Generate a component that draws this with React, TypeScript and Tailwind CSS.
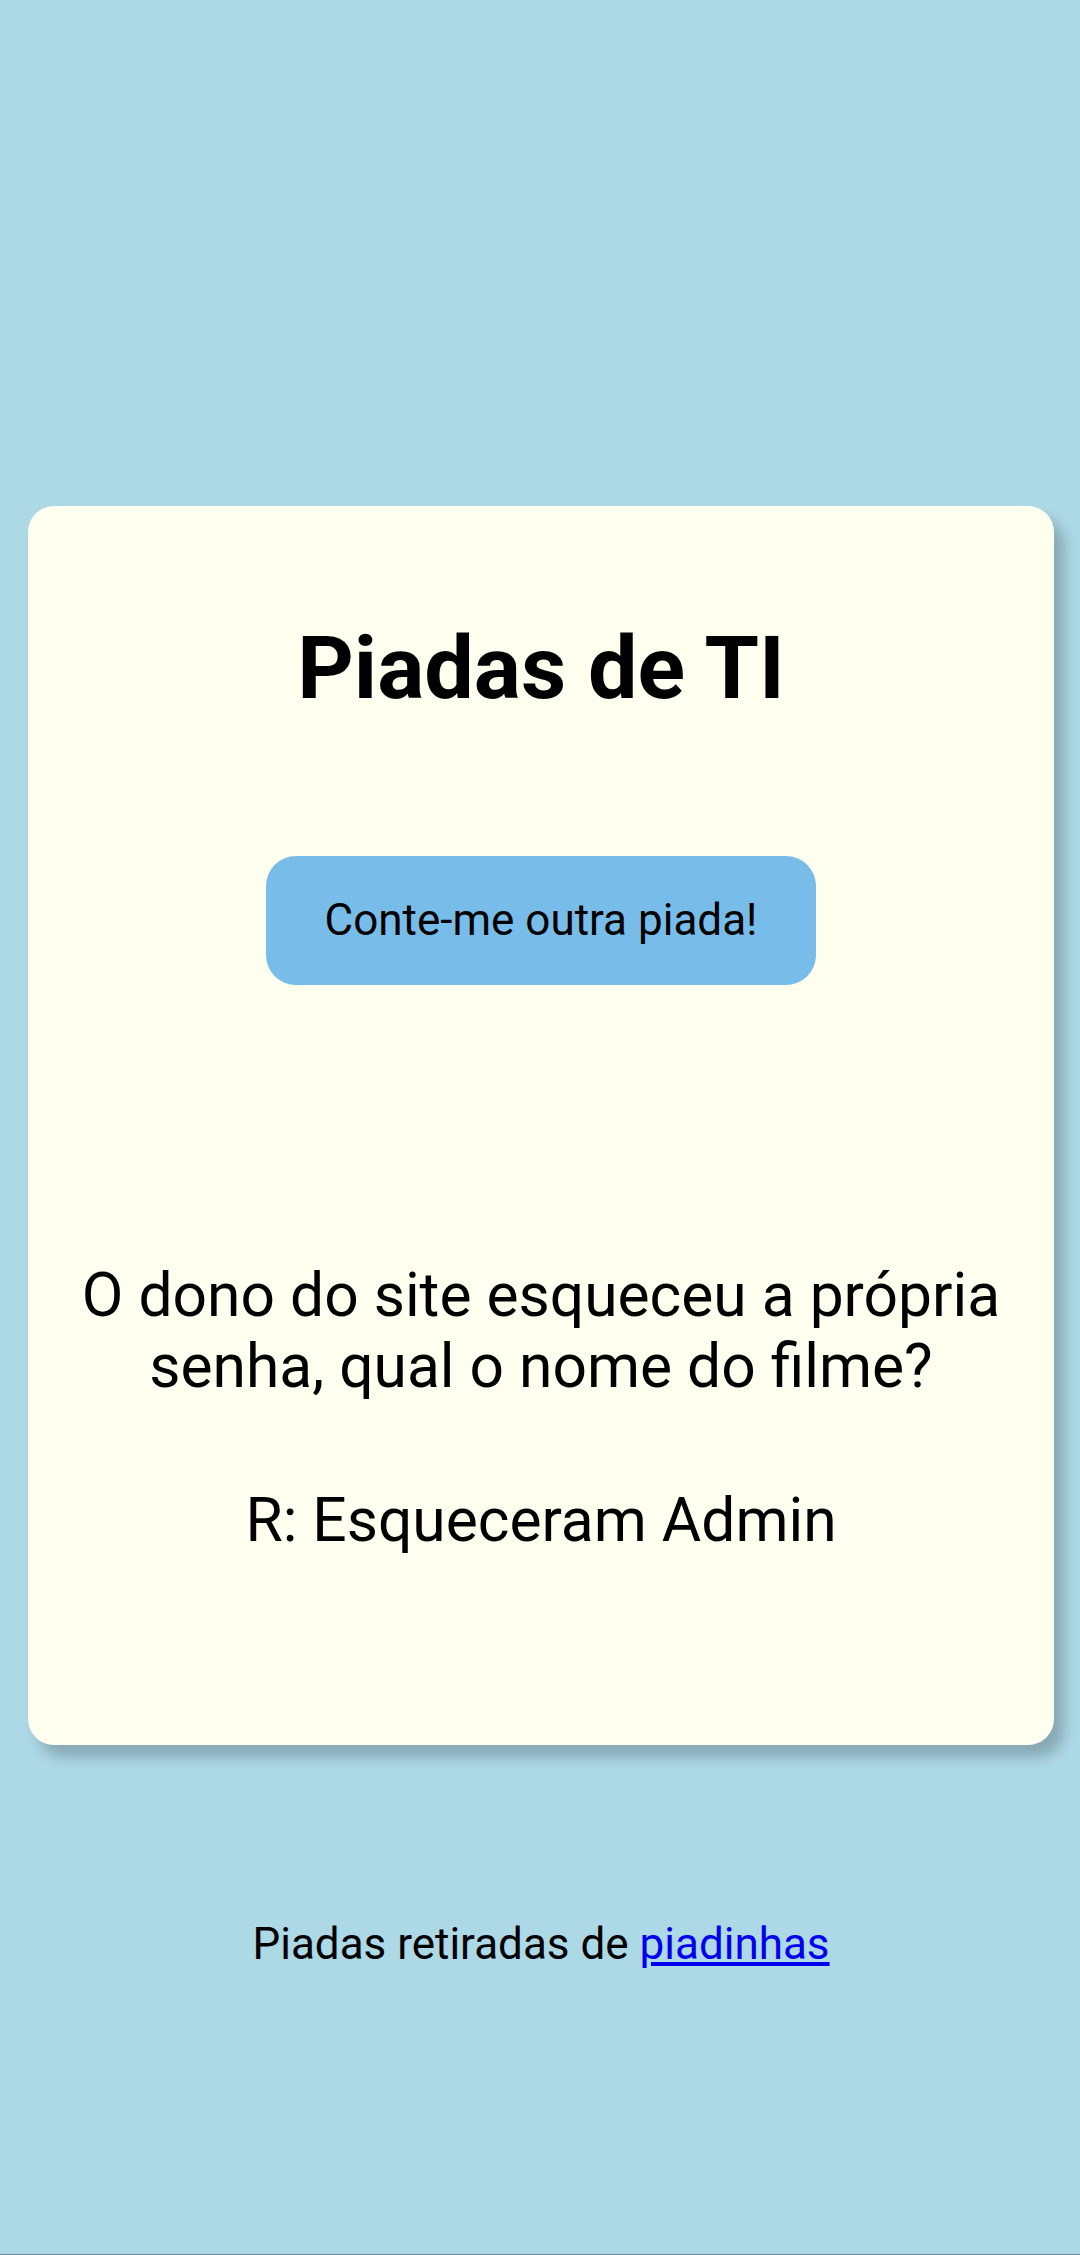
export default function App() {
  return (
    <div
      className="h-[2255px] bg-[#add8e6] border-b border-[#6d8c97] pl-[28px] pr-[26px] pt-[506px] text-black"
      style={{ fontFamily: "Roboto, 'Noto Sans', Arial, sans-serif" }}
    >
      <div className="bg-[#fffff0] rounded-[26px] shadow-[10px_12px_14px_rgba(0,0,0,0.22)] pt-[110px] pb-[188px] flex flex-col items-center text-center">
        <h1 className="text-[88px] font-bold leading-[1.172]">Piadas de TI</h1>

        <button className="mt-[137px] w-[550px] h-[129px] rounded-[30px] bg-[#78bdea] text-[44px] leading-[1.172] flex items-center justify-center">
          Conte-me outra piada!
        </button>

        <p className="mt-[276px] text-[60.5px] leading-[1.172] px-[20px]">
          O dono do site esqueceu a própria senha, qual o nome do filme?
        </p>

        <p className="mt-[83px] text-[60.5px] leading-[1.172]">R: Esqueceram Admin</p>
      </div>

      <p className="mt-[174px] text-center text-[44px] leading-[1.172]">
        Piadas retiradas de{" "}
        <a href="#" className="text-[#0000ee] underline">
          piadinhas
        </a>
      </p>
    </div>
  );
}
